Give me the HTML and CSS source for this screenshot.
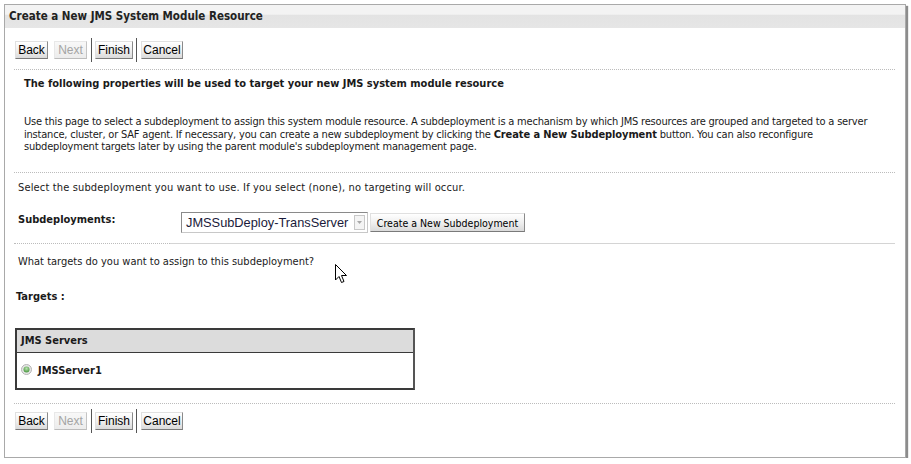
FILE: index.html
```html
<!DOCTYPE html>
<html>
<head>
<meta charset="utf-8">
<link rel="stylesheet" href="styles.css">
</head>
<body>
<div class="frame">
  <div class="header">Create a New JMS System Module Resource</div>
  <div class="content">
    <div class="btnrow top">
      <span class="btn back">Back</span>
      <span class="btn next disabled">Next</span>
      <span class="sep"></span>
      <span class="btn finish">Finish</span>
      <span class="sep sep2"></span>
      <span class="btn cancel">Cancel</span>
    </div>
    <div class="dots first"></div>
    <div class="intro">
      <div class="heading">The following properties will be used to target your new JMS system module resource</div>
      <p class="para">Use this page to select a subdeployment to assign this system module resource. A subdeployment is a mechanism by which JMS resources are grouped and targeted to a server<br>instance, cluster, or SAF agent. If necessary, you can create a new subdeployment by clicking the <b>Create a New Subdeployment</b> button. You can also reconfigure<br>subdeployment targets later by using the parent module's subdeployment management page.</p>
    </div>
    <div class="dots"></div>
    <div class="select-note">Select the subdeployment you want to use. If you select (none), no targeting will occur.</div>
    <div class="subrow">
      <span class="sublabel">Subdeployments:</span>
      <span class="select"><span class="seltext">JMSSubDeploy-TransServer</span><span class="arrow"><svg width="11" height="15" viewBox="0 0 11 15"><rect x="0.5" y="0.5" width="10" height="14" fill="#f4f4f4" stroke="#c8c8c8"/><path d="M3 6 L8 6 L5.5 9 Z" fill="#a8a8a8"/></svg></span></span>
      <span class="btn newsub">Create a New Subdeployment</span>
    </div>
    <div class="mixline"><span class="d"></span><span class="s"></span></div>
    <div class="targets-q">What targets do you want to assign to this subdeployment?</div>
    <div class="targets-label">Targets :</div>
    <div class="table">
      <div class="thead">JMS Servers</div>
      <div class="trow">
        <svg class="radio" width="11" height="11" viewBox="0 0 11 11"><defs><radialGradient id="g" cx="0.5" cy="0.35" r="0.6"><stop offset="0" stop-color="#b9e3b0"/><stop offset="1" stop-color="#4f9a45"/></radialGradient></defs><circle cx="5.5" cy="5.5" r="5" fill="#e6e6e6" stroke="#b4b4b4"/><circle cx="5.5" cy="5.5" r="3" fill="url(#g)"/></svg>
        <span>JMSServer1</span>
      </div>
    </div>
    <div class="dots bottom"></div>
    <div class="btnrow last">
      <span class="btn back">Back</span>
      <span class="btn next disabled">Next</span>
      <span class="sep"></span>
      <span class="btn finish">Finish</span>
      <span class="sep sep2"></span>
      <span class="btn cancel">Cancel</span>
    </div>
  </div>
  <svg class="cursor" width="13" height="21" viewBox="0 0 13 21"><path d="M0.5 0.5 L0.5 16 L4 12.5 L6.5 18.5 L9 17.5 L6.5 11.5 L11.5 11.5 Z" fill="#fff" stroke="#000" stroke-width="1"/></svg>
</div>
</body>
</html>
```
FILE: styles.css
```css
html, body {
  margin: 0;
  padding: 0;
  background: #fff;
}
body {
  font-family: "DejaVu Sans Condensed", Tahoma, sans-serif;
  font-size: 11px;
  color: #1a1a1a;
}
.frame {
  position: relative;
  margin: 4px 0 0 4px;
  width: 902px;
  height: 454px;
  border: 1px solid #a9a9a9;
  box-shadow: 2px 2px 1px #8c8c8c;
  box-sizing: border-box;
  background: #fff;
}
.header {
  height: 23px;
  line-height: 22px;
  padding-left: 4px;
  background: linear-gradient(#f3f3f3 0%, #f3f3f3 40%, #e3e3e3 45%, #e6e6e6 100%);
  font-weight: bold;
  font-size: 11.5px;
  color: #222;
}
.content {
  padding: 0 10px 0 9px;
}
.btnrow {
  display: flex;
  align-items: center;
  height: 22px;
}
.btnrow.top {
  margin-top: 11px;
}
.btnrow.last {
  margin-top: 6px;
}
.btn {
  display: inline-flex;
  align-items: center;
  justify-content: center;
  height: 18px;
  box-sizing: border-box;
  border: 1px solid;
  border-color: #e0e0e0 #8a8a8a #7a7a7a #e0e0e0;
  background: linear-gradient(#ffffff, #eeeeee 55%, #dadada);
  font-family: "Liberation Sans", Arial, sans-serif;
  font-size: 12px;
  color: #000;
}
.btn.back { width: 33px; margin-left: 1px; }
.btn.next { width: 33px; margin-left: 6px; }
.btn.finish { width: 38px; }
.btn.cancel { width: 42px; }
.btn.disabled {
  color: #a4a4a4;
  border-color: #e8e8e8 #c4c4c4 #bcbcbc #e8e8e8;
  background: linear-gradient(#f8f8f8, #ececec);
}
.sep {
  width: 1px;
  height: 24px;
  background: #555;
  margin: 0 3px 0 4px;
}
.sep.sep2 {
  margin: 0 4px 0 3px;
}
.dots {
  height: 0;
  border-top: 1px dotted #bcbcbc;
  margin-top: 6px;
}
.dots.first {
  margin-top: 8px;
}
.intro {
  padding-left: 10px;
}
.heading {
  font-weight: bold;
  margin-top: 7px;
  line-height: 13px;
}
.para {
  margin: 26px 0 0 0;
  line-height: 12.7px;
  height: 50px;
  white-space: nowrap;
  letter-spacing: -0.2px;
}
.para b { font-weight: bold; letter-spacing: -0.1px; }
.select-note {
  padding-left: 4px;
  margin-top: 8px;
  line-height: 13px;
  letter-spacing: 0.15px;
}
.subrow {
  display: flex;
  align-items: center;
  margin-top: 18px;
  height: 21px;
}
.sublabel {
  font-weight: bold;
  width: 163px;
  padding-left: 4px;
  margin-top: -6px;
}
.select {
  display: inline-flex;
  align-items: center;
  width: 187px;
  height: 21px;
  box-sizing: border-box;
  border: 1px solid;
  border-color: #8a8a8a #c8c8c8 #c8c8c8 #8a8a8a;
  background: #fff;
  font-family: "Liberation Sans", Arial, sans-serif;
  font-size: 12.8px;
  color: #1a1a3a;
  padding-left: 4px;
}
.seltext { flex: 1; white-space: nowrap; }
.arrow { display: flex; margin-right: 2px; }
.btn.newsub {
  margin-left: 2px;
  width: 155px;
  height: 19px;
  font-family: "DejaVu Sans Condensed", Tahoma, sans-serif;
  font-size: 10.5px;
}
.mixline {
  display: flex;
  margin-top: 10px;
  height: 1px;
}
.mixline .d {
  width: 156px;
  border-top: 1px dotted #bcbcbc;
}
.mixline .s {
  flex: 1;
  border-top: 1px solid #d4d4d4;
}
.targets-q {
  padding-left: 4px;
  margin-top: 11px;
  line-height: 13px;
}
.targets-label {
  font-weight: bold;
  padding-left: 2px;
  margin-top: 22px;
  line-height: 13px;
}
.table {
  margin-top: 25px;
  margin-left: 1px;
  width: 400px;
  height: 62px;
  box-sizing: border-box;
  border: 2px solid #3a3a3a;
  border-right-color: #555;
}
.thead {
  height: 22px;
  line-height: 22px;
  background: #dcdcdc;
  border-bottom: 1px solid #3a3a3a;
  font-weight: bold;
  padding-left: 4px;
}
.trow {
  display: flex;
  align-items: center;
  height: 35px;
  padding-left: 4px;
  font-weight: bold;
}
.radio { margin-right: 6px; margin-top: -2px; }
.dots.bottom {
  margin-top: 13px;
}
.cursor {
  position: absolute;
  left: 330px;
  top: 259px;
}
```
